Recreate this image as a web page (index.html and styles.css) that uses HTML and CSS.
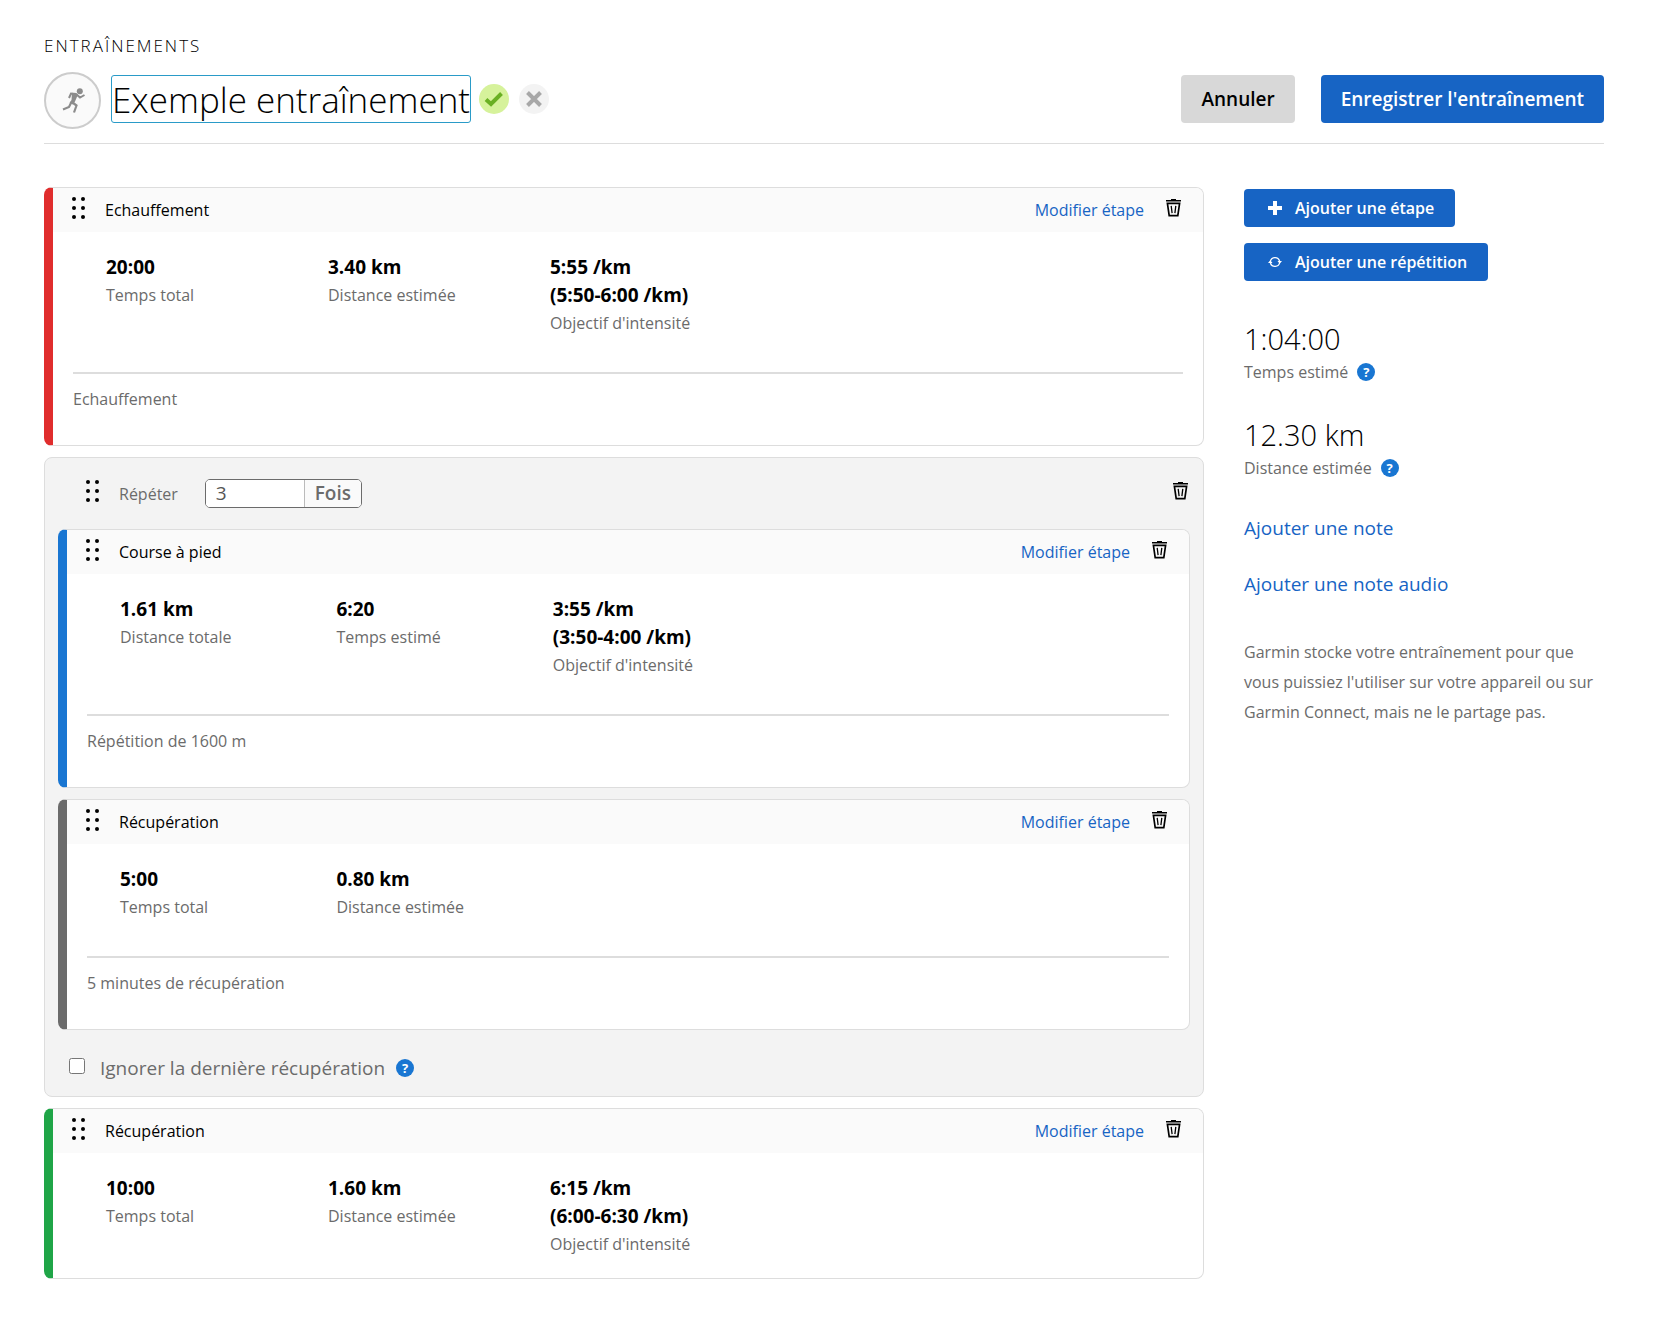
FILE: index.html
```html
<!DOCTYPE html>
<html lang="fr">
<head>
    <meta charset="UTF-8">
    <meta name="viewport" content="width=device-width, initial-scale=1.0">
    <link rel="stylesheet" href="styles.css">
    <title>Exemple entraînement</title>
</head>
<body>
    <!-- Shared icons -->
    <svg class="sprite" aria-hidden="true">
        <symbol id="icon-grip" viewBox="0 0 14 22">
            <circle cx="2" cy="2" r="2"/><circle cx="11" cy="2" r="2"/>
            <circle cx="2" cy="11" r="2"/><circle cx="11" cy="11" r="2"/>
            <circle cx="2" cy="20" r="2"/><circle cx="11" cy="20" r="2"/>
        </symbol>
        <symbol id="icon-trash" viewBox="0 0 15 18">
            <path d="M0 1.700h15M5 .7h5" fill="none" stroke="currentColor" stroke-width="1.400"/>
            <path d="M1.400 4.300h12.200L11.800 16.600H3.200z" fill="none" stroke="currentColor" stroke-width="1.700"/>
            <path d="M5.200 6.800l.9 7.400M9.800 6.800l-.9 7.400" fill="none" stroke="currentColor" stroke-width="1.300"/>
        </symbol>
    </svg>

    <header class="page-header">
        <p class="eyebrow">Entraînements</p>
        <div class="title-row">
            <div class="sport-icon">
                <svg width="24" height="26" viewBox="0 0 24 26" aria-hidden="true">
                    <circle cx="18.800" cy="3.200" r="3" fill="#8c8c8c"/>
                    <path d="M8 10l2-4.500 5 .5 4 3.500 4.500-2.500" fill="none" stroke="#8c8c8c" stroke-width="2"/>
                    <path d="M11 4.700l6 1.800-3 7-2 3-3.500-1.500 2-3z" fill="#8c8c8c"/>
                    <path d="M10.500 14l-2.500 5-6 2.500M11.500 14.500l4 3L13 24.500" fill="none" stroke="#8c8c8c" stroke-width="2.200"/>
                </svg>
            </div>
            <input class="title-input" type="text" value="Exemple entraînement" aria-label="Nom de l'entraînement">
            <button class="round-button confirm" type="button" aria-label="Valider">
                <svg width="20" height="16" viewBox="0 0 20 16"><path d="M2 8.500l5 4.500L17.500 2.500" fill="none" stroke="#6ab023" stroke-width="4"/></svg>
            </button>
            <button class="round-button discard" type="button" aria-label="Effacer">
                <svg width="16" height="16" viewBox="0 0 16 16"><path d="M1.500 1.500l13 13M14.500 1.500l-13 13" fill="none" stroke="#a8a8a8" stroke-width="4"/></svg>
            </button>
            <div class="header-actions">
                <button class="button button-cancel" type="button">Annuler</button>
                <button class="button button-save" type="button">Enregistrer l'entraînement</button>
            </div>
        </div>
    </header>

    <div class="layout">
        <main class="steps">
            <section class="step warmup">
                <div class="step-header">
                    <svg class="grip"><use href="#icon-grip"/></svg>
                    <h2>Echauffement</h2>
                    <a class="edit-link" href="#">Modifier étape</a>
                    <button class="delete" type="button" aria-label="Supprimer"><svg><use href="#icon-trash"/></svg></button>
                </div>
                <div class="step-body">
                    <dl class="stats">
                        <div><dd>20:00</dd><dt>Temps total</dt></div>
                        <div><dd>3.40 km</dd><dt>Distance estimée</dt></div>
                        <div><dd>5:55 /km<br>(5:50-6:00 /km)</dd><dt>Objectif d'intensité</dt></div>
                    </dl>
                    <p class="note">Echauffement</p>
                </div>
            </section>

            <section class="repeat">
                <div class="repeat-header">
                    <svg class="grip"><use href="#icon-grip"/></svg>
                    <label for="repeatCount">Répéter</label>
                    <div class="repeat-count">
                        <input id="repeatCount" type="text" value="3">
                        <span>Fois</span>
                    </div>
                    <button class="delete" type="button" aria-label="Supprimer"><svg><use href="#icon-trash"/></svg></button>
                </div>

                <section class="step run">
                    <div class="step-header">
                        <svg class="grip"><use href="#icon-grip"/></svg>
                        <h2>Course à pied</h2>
                        <a class="edit-link" href="#">Modifier étape</a>
                        <button class="delete" type="button" aria-label="Supprimer"><svg><use href="#icon-trash"/></svg></button>
                    </div>
                    <div class="step-body">
                        <dl class="stats">
                            <div><dd>1.61 km</dd><dt>Distance totale</dt></div>
                            <div><dd>6:20</dd><dt>Temps estimé</dt></div>
                            <div><dd>3:55 /km<br>(3:50-4:00 /km)</dd><dt>Objectif d'intensité</dt></div>
                        </dl>
                        <p class="note">Répétition de 1600 m</p>
                    </div>
                </section>

                <section class="step recovery">
                    <div class="step-header">
                        <svg class="grip"><use href="#icon-grip"/></svg>
                        <h2>Récupération</h2>
                        <a class="edit-link" href="#">Modifier étape</a>
                        <button class="delete" type="button" aria-label="Supprimer"><svg><use href="#icon-trash"/></svg></button>
                    </div>
                    <div class="step-body">
                        <dl class="stats">
                            <div><dd>5:00</dd><dt>Temps total</dt></div>
                            <div><dd>0.80 km</dd><dt>Distance estimée</dt></div>
                        </dl>
                        <p class="note">5 minutes de récupération</p>
                    </div>
                </section>

                <div class="skip-last">
                    <input id="skipLast" type="checkbox">
                    <label for="skipLast">Ignorer la dernière récupération</label>
                    <button class="help" type="button" aria-label="Aide">?</button>
                </div>
            </section>

            <section class="step cooldown">
                <div class="step-header">
                    <svg class="grip"><use href="#icon-grip"/></svg>
                    <h2>Récupération</h2>
                    <a class="edit-link" href="#">Modifier étape</a>
                    <button class="delete" type="button" aria-label="Supprimer"><svg><use href="#icon-trash"/></svg></button>
                </div>
                <div class="step-body">
                    <dl class="stats">
                        <div><dd>10:00</dd><dt>Temps total</dt></div>
                        <div><dd>1.60 km</dd><dt>Distance estimée</dt></div>
                        <div><dd>6:15 /km<br>(6:00-6:30 /km)</dd><dt>Objectif d'intensité</dt></div>
                    </dl>
                </div>
            </section>
        </main>

        <aside class="sidebar">
            <button class="button button-add" type="button">
                <svg width="14" height="14" viewBox="0 0 14 14"><path d="M7 0v14M0 7h14" stroke="#fff" stroke-width="4"/></svg>
                Ajouter une étape
            </button>
            <button class="button button-add" type="button">
                <svg width="14" height="14" viewBox="0 0 14 14">
                    <path d="M2.300 6.500a4.800 4.800 0 0 1 9.300-.5M11.700 7.500a4.800 4.800 0 0 1-9.300.5" fill="none" stroke="#fff" stroke-width="1.300"/>
                    <path d="M9.500 6H14l-2.300 2.700zM0 8h4.500L2.300 5.300z" fill="#fff"/>
                </svg>
                Ajouter une répétition
            </button>

            <div class="total">
                <p class="total-value">1:04:00</p>
                <p class="total-label">Temps estimé <button class="help" type="button" aria-label="Aide">?</button></p>
            </div>
            <div class="total">
                <p class="total-value">12.30 km</p>
                <p class="total-label">Distance estimée <button class="help" type="button" aria-label="Aide">?</button></p>
            </div>

            <a class="note-link" href="#">Ajouter une note</a>
            <a class="note-link" href="#">Ajouter une note audio</a>

            <p class="privacy">Garmin stocke votre entraînement pour que vous puissiez l'utiliser sur votre appareil ou sur Garmin Connect, mais ne le partage pas.</p>
        </aside>
    </div>
</body>
</html>
```
FILE: styles.css
```css
* {
    margin: 0;
    padding: 0;
    box-sizing: border-box;
}

body {
    font-family: 'Open Sans', sans-serif;
    font-size: 16px;
    line-height: 28px;
    background-color: #fff;
    color: #000;
    padding: 32px 58px 56px 44px;
}

button,
input {
    font-family: inherit;
}

button {
    border: none;
    cursor: pointer;
}

a {
    color: #1764c4;
    text-decoration: none;
}

a:hover {
    text-decoration: underline;
}

.sprite {
    display: none;
}

/* Header */
.page-header {
    border-bottom: 1px solid #ddd;
    padding-bottom: 14px;
}

.eyebrow {
    font-size: 17px;
    font-weight: 300;
    letter-spacing: 2px;
    text-transform: uppercase;
    margin-bottom: 9px;
}

.title-row {
    display: flex;
    align-items: center;
}

.sport-icon {
    display: flex;
    align-items: center;
    justify-content: center;
    width: 57px;
    height: 57px;
    border: 2px solid #ccc;
    border-radius: 50%;
    background-color: #fafafa;
    margin-top: 3px;
    margin-right: 10px;
}

.title-input {
    width: 360px;
    height: 48px;
    border: 1px solid #2a9bc8;
    border-radius: 3px;
    font-size: 35px;
    font-weight: 300;
    outline: none;
    margin-right: 8px;
}

.round-button {
    display: flex;
    align-items: center;
    justify-content: center;
    width: 30px;
    height: 30px;
    border-radius: 50%;
    margin-right: 10px;
}

.confirm {
    background-color: #d6f29b;
}

.discard {
    background-color: #f3f3f3;
}

.header-actions {
    display: flex;
    gap: 26px;
    margin-left: auto;
}

.button {
    border-radius: 4px;
    font-weight: 600;
    color: #fff;
    background-color: #1764c4;
}

.button-cancel,
.button-save {
    height: 48px;
    padding: 0 20px;
    font-size: 19px;
}

.button-cancel {
    background-color: #d8d8d8;
    color: #000;
}

/* Steps on the left, summary on the right */
.layout {
    display: flex;
    align-items: flex-start;
    gap: 40px;
    margin-top: 43px;
}

.steps {
    flex: 1;
    display: flex;
    flex-direction: column;
    gap: 11px;
}

.step {
    border: 1px solid #ddd;
    border-left: 9px solid #ddd;
    border-radius: 8px;
    background-color: #fff;
    overflow: hidden;
}

.warmup { border-left-color: #e02d2d; }
.run { border-left-color: #1976d2; }
.recovery { border-left-color: #6b6b6b; }
.cooldown { border-left-color: #1fa547; }

.step-header {
    display: flex;
    align-items: center;
    height: 44px;
    padding: 0 22px 0 19px;
    background-color: #fafafa;
}

.grip {
    width: 14px;
    height: 22px;
    margin-right: 19px;
    margin-bottom: 4px;
}

.step-header h2 {
    font-size: 16px;
    font-weight: 400;
}

.edit-link {
    margin-left: auto;
    margin-right: 22px;
}

.delete {
    width: 15px;
    height: 18px;
    margin-bottom: 4px;
    background: none;
}

.delete svg {
    display: block;
    width: 15px;
    height: 18px;
}

.step-body {
    padding: 21px 20px 20px;
}

.stats {
    display: grid;
    grid-template-columns: repeat(5, 1fr);
}

.stats div {
    display: flex;
    flex-direction: column;
    padding-left: 33px;
    white-space: nowrap;
}

.stats dd {
    font-size: 19px;
    font-weight: 700;
}

.stats dt {
    color: #6b6b6b;
}

.note {
    margin-top: 35px;
    padding: 11px 0 12px;
    border-top: 2px solid #ddd;
    color: #6b6b6b;
}

/* Repeat block */
.repeat {
    display: flex;
    flex-direction: column;
    gap: 11px;
    padding: 20px 13px 14px;
    border: 1px solid #ddd;
    border-radius: 8px;
    background-color: #f3f3f3;
}

.repeat-header {
    display: flex;
    align-items: center;
    padding: 0 2px 10px 28px;
    color: #6b6b6b;
}

.repeat-header .grip {
    color: #000;
}

.repeat-header label {
    padding-top: 2px;
}

.repeat-count {
    display: flex;
    width: 157px;
    height: 29px;
    margin-left: 27px;
    border: 1px solid #6b6b6b;
    border-radius: 5px;
    background-color: #fff;
    overflow: hidden;
}

.repeat-count input {
    width: 99px;
    padding: 0 10px;
    border: none;
    border-right: 1px solid #bbb;
    font-size: 19px;
    color: #555;
}

.repeat-count span {
    flex: 1;
    font-size: 19px;
    font-weight: 600;
    line-height: 27px;
    text-align: center;
    background-color: #fafafa;
}

.repeat-header .delete {
    margin-left: auto;
    color: #000;
}

.skip-last {
    display: flex;
    align-items: center;
    padding: 13px 0 0 11px;
    font-size: 19px;
    color: #6b6b6b;
}

.skip-last input {
    width: 16px;
    height: 16px;
    margin-right: 15px;
    margin-bottom: 4px;
}

.skip-last .help {
    margin-left: 11px;
}

.help {
    width: 18px;
    height: 18px;
    border-radius: 50%;
    background-color: #1976d2;
    color: #fff;
    font-size: 13px;
    font-weight: 700;
    line-height: 18px;
}

/* Summary */
.sidebar {
    width: 360px;
    padding-top: 2px;
}

.button-add {
    display: flex;
    align-items: center;
    height: 38px;
    padding: 0 21px 0 24px;
    font-size: 16px;
    margin-bottom: 16px;
}

.button-add svg {
    margin-right: 13px;
}

.total {
    padding-top: 20px;
    margin-bottom: 11px;
}

.button-add + .total {
    padding-top: 24px;
}

.total-value {
    font-size: 29px;
    font-weight: 300;
    line-height: 36px;
}

.total-label {
    display: flex;
    align-items: center;
    gap: 9px;
    padding-top: 1px;
    color: #6b6b6b;
}

.note-link {
    display: block;
    margin-top: 28px;
    font-size: 19px;
}

.total + .note-link {
    margin-top: 32px;
}

.privacy {
    margin-top: 39px;
    line-height: 30px;
    color: #6b6b6b;
}
```
